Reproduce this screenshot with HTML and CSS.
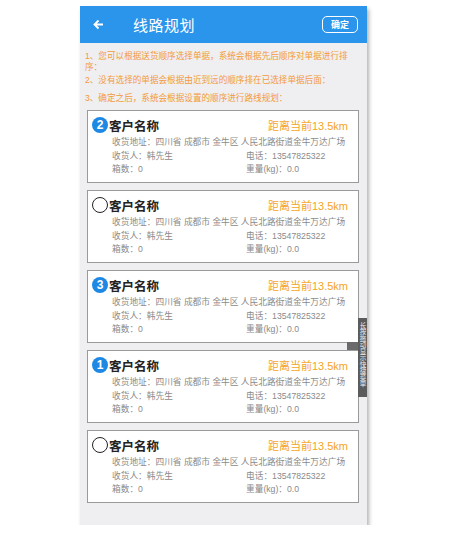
FILE: index.html
```html
<!DOCTYPE html>
<html lang="zh-CN">
<head>
    <meta charset="UTF-8">
    <meta name="viewport" content="width=device-width, initial-scale=1.0">
    <title>线路规划</title>
    <link rel="stylesheet" href="styles.css">
</head>
<body>
    <div class="phone">
        <div class="header">
            <svg class="back" width="11" height="11" viewBox="0 0 11 11">
                <path d="M10 5.5H1.5M5.5 1.5L1.5 5.5L5.5 9.5" fill="none" stroke="#fff" stroke-width="1.8"/>
            </svg>
            <h1>线路规划</h1>
            <button class="ok">确定</button>
        </div>

        <div class="notes">
            <p>1、您可以根据送货顺序选择单据，系统会根据先后顺序对单据进行排序：</p>
            <p>2、没有选择的单据会根据由近到远的顺序排在已选择单据后面：</p>
            <p class="last">3、确定之后，系统会根据设置的顺序进行路线规划：</p>
        </div>

        <div class="list">
            <div class="card">
                <div class="card-head">
                    <span class="badge">2</span>
                    <span class="name">客户名称</span>
                    <span class="dist">距离当前13.5km</span>
                </div>
                <div class="info">
                    <div class="full">收货地址：四川省 成都市 金牛区 人民北路街道金牛万达广场</div>
                    <div>收货人：韩先生</div>
                    <div>电话：13547825322</div>
                    <div>箱数：0</div>
                    <div>重量(kg)：0.0</div>
                </div>
            </div>

            <div class="card">
                <div class="card-head">
                    <span class="badge empty"></span>
                    <span class="name">客户名称</span>
                    <span class="dist">距离当前13.5km</span>
                </div>
                <div class="info">
                    <div class="full">收货地址：四川省 成都市 金牛区 人民北路街道金牛万达广场</div>
                    <div>收货人：韩先生</div>
                    <div>电话：13547825322</div>
                    <div>箱数：0</div>
                    <div>重量(kg)：0.0</div>
                </div>
            </div>

            <div class="card">
                <div class="card-head">
                    <span class="badge">3</span>
                    <span class="name">客户名称</span>
                    <span class="dist">距离当前13.5km</span>
                </div>
                <div class="info">
                    <div class="full">收货地址：四川省 成都市 金牛区 人民北路街道金牛万达广场</div>
                    <div>收货人：韩先生</div>
                    <div>电话：13547825322</div>
                    <div>箱数：0</div>
                    <div>重量(kg)：0.0</div>
                </div>
            </div>

            <div class="card">
                <div class="card-head">
                    <span class="badge">1</span>
                    <span class="name">客户名称</span>
                    <span class="dist">距离当前13.5km</span>
                </div>
                <div class="info">
                    <div class="full">收货地址：四川省 成都市 金牛区 人民北路街道金牛万达广场</div>
                    <div>收货人：韩先生</div>
                    <div>电话：13547825322</div>
                    <div>箱数：0</div>
                    <div>重量(kg)：0.0</div>
                </div>
            </div>

            <div class="card">
                <div class="card-head">
                    <span class="badge empty"></span>
                    <span class="name">客户名称</span>
                    <span class="dist">距离当前13.5km</span>
                </div>
                <div class="info">
                    <div class="full">收货地址：四川省 成都市 金牛区 人民北路街道金牛万达广场</div>
                    <div>收货人：韩先生</div>
                    <div>电话：13547825322</div>
                    <div>箱数：0</div>
                    <div>重量(kg)：0.0</div>
                </div>
            </div>
        </div>

        <!-- floating side tab -->
        <div class="side-tab">
            <span class="side-link"></span>
            <span class="side-text">长按拖动显示快捷菜单</span>
        </div>
    </div>
</body>
</html>
```

FILE: styles.css
```css
body {
    margin: 0;
    background: #fff;
    font-family: "Liberation Sans", "Noto Sans CJK SC", sans-serif;
}

.phone {
    position: relative;
    width: 287px;
    margin: 6px 0 0 80px;
    padding-bottom: 22px;
    background: #efeff1;
    box-shadow: 2px 3px 4px rgba(0, 0, 0, 0.3);
}

.header {
    display: flex;
    align-items: center;
    height: 37px;
    padding: 0 9px 0 13px;
    background: #2b95ec;
    color: #fff;
}

.header h1 {
    margin: 0 0 0 29px;
    font-size: 15px;
    font-weight: normal;
    letter-spacing: 0.5px;
}

.ok {
    margin-left: auto;
    width: 36px;
    height: 17px;
    padding: 0;
    border: 1px solid #fff;
    border-radius: 5px;
    background: transparent;
    color: #fff;
    font-family: inherit;
    font-size: 9px;
    font-weight: bold;
}

.notes {
    padding: 8px 10px 0 5px;
    color: #f39a3a;
    font-size: 8.6px;
    line-height: 11px;
}

.notes p {
    margin: 0 0 2px;
}

.notes p.last {
    margin-top: 7px;
    margin-bottom: 6px;
}

.list {
    display: flex;
    flex-direction: column;
    gap: 7px;
    padding: 0 8px 0 7px;
}

.card {
    background: #fff;
    border: 1px solid #9a9a9a;
    padding: 4px 10px 5.5px 4px;
}

.card-head {
    display: flex;
    align-items: center;
    height: 20px;
}

.badge {
    display: flex;
    justify-content: center;
    align-items: center;
    width: 16px;
    height: 16px;
    border-radius: 50%;
    background: #1e88e5;
    color: #fff;
    font-size: 12px;
    font-weight: bold;
}

.badge.empty {
    box-sizing: border-box;
    background: #fff;
    border: 1.5px solid #222;
}

.name {
    margin-left: 1px;
    font-size: 12.5px;
    font-weight: bold;
    color: #222;
}

.dist {
    margin-left: auto;
    font-size: 11px;
    color: #f5a524;
}

.info {
    display: grid;
    grid-template-columns: 134px 1fr;
    margin-top: 1px;
    padding-left: 20px;
    font-size: 8.7px;
    line-height: 13.5px;
    color: #8a8a8a;
}

.info .full {
    grid-column: 1 / 3;
    white-space: nowrap;
}

.side-tab {
    position: absolute;
    top: 312px;
    right: 0;
    width: 9px;
    height: 79px;
    background: #5b5b5b;
}

.side-link {
    position: absolute;
    top: 24px;
    left: -11px;
    width: 11px;
    height: 8px;
    background: #6a6a6a;
}

.side-text {
    display: block;
    writing-mode: vertical-rl;
    font-size: 6.5px;
    line-height: 9px;
    color: #eee;
    text-align: center;
    padding-top: 4px;
}
```
